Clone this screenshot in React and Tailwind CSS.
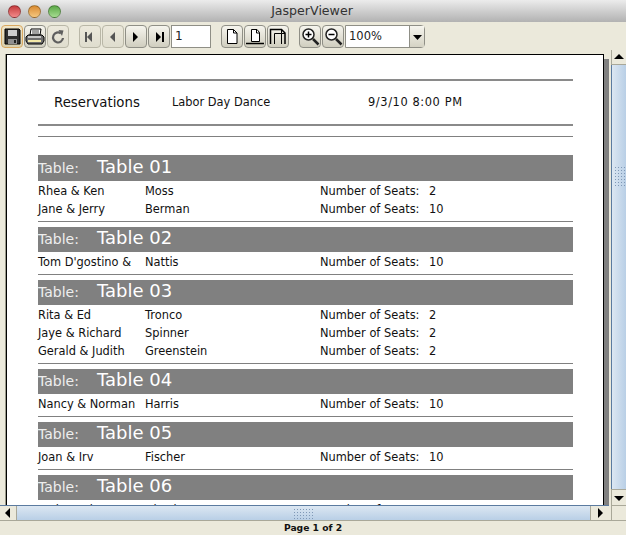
const font = { fontFamily: '"DejaVu Sans", sans-serif' }

const tables = [
  { name: 'Table 01', rows: [['Rhea & Ken', 'Moss', '2'], ['Jane & Jerry', 'Berman', '10']] },
  { name: 'Table 02', rows: [["Tom D'gostino &", 'Nattis', '10']] },
  { name: 'Table 03', rows: [['Rita & Ed', 'Tronco', '2'], ['Jaye & Richard', 'Spinner', '2'], ['Gerald & Judith', 'Greenstein', '2']] },
  { name: 'Table 04', rows: [['Nancy & Norman', 'Harris', '10']] },
  { name: 'Table 05', rows: [['Joan & Irv', 'Fischer', '10']] },
  { name: 'Table 06', rows: [['Lori & Bob', 'Hirsch', '10']] },
]

function Light({ className }) {
  return <span className={`block w-[13px] h-[13px] rounded-full border border-black/30 bg-gradient-to-b ${className}`} />
}

function ToolButton({ children, active, dim }) {
  return (
    <button
      className={`w-[22px] h-[23px] flex items-center justify-center rounded-[4px] border bg-gradient-to-b ${
        active
          ? 'border-[#d9a860] from-[#f1e6c8] to-[#d8cfae]'
          : dim
            ? 'border-[#b9b7a7] from-[#ece9dc] to-[#dfddce]'
            : 'border-[#8f8f86] from-[#f6f5ee] to-[#d0cebf]'
      }`}
    >
      {children}
    </button>
  )
}

function Arrow({ dir, color = '#000', bar }) {
  const shape = dir === 'left' ? '8,2 3,7 8,12' : '3,2 8,7 3,12'
  return (
    <svg width="12" height="14" viewBox="0 0 12 14">
      <polygon points={shape} fill={color} />
      {bar === 'left' && <rect x="1" y="2" width="2" height="10" fill={color} />}
      {bar === 'right' && <rect x="9" y="2" width="2" height="10" fill={color} />}
    </svg>
  )
}

function SaveIcon() {
  return (
    <svg width="17" height="17" viewBox="0 0 17 17">
      <path d="M1 1h14l1 1v14H1z" fill="#2f2f2f" stroke="#000" />
      <rect x="4" y="2" width="9" height="6" fill="#cfcfcf" />
      <rect x="4" y="11" width="9" height="5" fill="#8f8f8f" />
      <rect x="10" y="12" width="2" height="3" fill="#222" />
    </svg>
  )
}

function PrintIcon() {
  return (
    <svg width="20" height="17" viewBox="0 0 20 17">
      <path d="M6 1h10l-1 6H5z" fill="#fff" stroke="#000" />
      <path d="M7 3h7M7 5h7" stroke="#444" />
      <path d="M3 7h14l2 2v4l-2 3H3l-2-3V9z" fill="#6f6f6f" stroke="#000" />
      <rect x="3" y="12" width="13" height="2" fill="#f4e9a8" />
      <path d="M3 9h13" stroke="#e4e4e4" strokeWidth="1.500" />
    </svg>
  )
}

function ReloadIcon() {
  return (
    <svg width="16" height="16" viewBox="0 0 16 16" fill="none">
      <path d="M10.800 4.300A5 5 0 1 0 13 9" stroke="#5e5e5e" strokeWidth="2.200" />
      <polygon points="8.500,1 13.500,1.500 12,7" fill="#5e5e5e" />
    </svg>
  )
}

function ActualIcon() {
  return (
    <svg width="14" height="17" viewBox="0 0 14 17" fill="none" stroke="#000">
      <path d="M2.500 1.500h6l3.500 3.500v10.500h-9.500z" fill="#fff" />
      <path d="M8.500 1.500v3.500h3.500" />
    </svg>
  )
}

function FitWidthIcon() {
  return (
    <svg width="18" height="17" viewBox="0 0 18 17" fill="none" stroke="#000">
      <path d="M5.500 1.500h5.500l2.500 3v9h-8z" fill="#fff" />
      <path d="M10.500 1.500v3.500h3" />
      <path d="M0 15.500h18" strokeWidth="1.500" />
    </svg>
  )
}

function FitPageIcon() {
  return (
    <svg width="18" height="17" viewBox="0 0 18 17" fill="none" stroke="#000">
      <path d="M1.500 16v-14.500h11l3.500 3.500v11" strokeWidth="1.500" />
      <path d="M5.500 16v-10.500h7v10.500" />
      <path d="M12.500 1.500v4h3.500" />
    </svg>
  )
}

function ZoomIcon({ plus }) {
  return (
    <svg width="19" height="19" viewBox="0 0 19 19" fill="none">
      <circle cx="7.500" cy="7.500" r="5.500" fill="#fff" stroke="#222" strokeWidth="1.500" />
      <path d="M12 12l5.500 5.500" stroke="#222" strokeWidth="2.500" />
      <path d="M4.500 7.500h6" stroke="#000" strokeWidth="1.500" />
      {plus && <path d="M7.500 4.500v6" stroke="#000" strokeWidth="1.500" />}
    </svg>
  )
}

function Dots({ className }) {
  return (
    <div
      className={`bg-[radial-gradient(#7f98b6_0.7px,transparent_0.9px)] bg-[length:3px_3px] ${className}`}
    />
  )
}

function ScrollButton({ points, className }) {
  return (
    <div className={`flex items-center justify-center bg-[#ebe9db] border-[#a9a899] ${className}`}>
      <svg width="10" height="10" viewBox="0 0 10 10">
        <polygon points={points} fill="#000" />
      </svg>
    </div>
  )
}

function TableGroup({ table, first }) {
  return (
    <div>
      <div className={`h-[26px] bg-[#808080] text-white flex items-center ${first ? '' : 'shadow-[inset_0_1px_0_#fff]'}`}>
        <span className="w-[59px] text-[14px] text-[#eeeeee]">Table:</span>
        <span className="text-[18px] pb-[3px]">{table.name}</span>
      </div>
      {table.rows.map((row) => (
        <div key={row[0]} className="h-[18px] flex items-center pt-[4px] text-[11.4px] text-[#111]">
          <span className="w-[107px] whitespace-nowrap">{row[0]}</span>
          <span className="w-[175px]">{row[1]}</span>
          <span className="w-[109px]">Number of Seats:</span>
          <span>{row[2]}</span>
        </div>
      ))}
      <div className="h-[9px] pt-[4px]">
        <div className="h-px bg-[#808080]" />
      </div>
    </div>
  )
}

export default function App() {
  return (
    <div className="w-[626px] h-[535px] flex flex-col overflow-hidden bg-[#ebe9db]" style={font}>
      <div className="h-[22px] relative flex items-center justify-center pt-px pr-[2px] bg-gradient-to-b from-[#ececec] to-[#b2b2b2] text-[12.6px] text-[#333]">
        <div className="absolute left-[8px] top-[5px] flex gap-[7px]">
          <Light className="from-[#c4383c] to-[#f2898a]" />
          <Light className="from-[#d98a2c] to-[#f5c77e]" />
          <Light className="from-[#5aa845] to-[#a5dc90]" />
        </div>
        JasperViewer
      </div>

      <div className="h-[29px] flex items-center pl-px pt-[2px] bg-[#ebe9db]">
        <div className="flex gap-px">
          <ToolButton active><SaveIcon /></ToolButton>
          <ToolButton><PrintIcon /></ToolButton>
          <ToolButton dim><ReloadIcon /></ToolButton>
        </div>
        <div className="flex gap-px ml-[10px]">
          <ToolButton dim><Arrow dir="left" bar="left" color="#555" /></ToolButton>
          <ToolButton dim><Arrow dir="left" color="#555" /></ToolButton>
          <ToolButton><Arrow dir="right" /></ToolButton>
          <ToolButton><Arrow dir="right" bar="right" /></ToolButton>
          <div className="w-[40px] h-[23px] bg-white border border-[#8f8f86] text-[12px] text-[#222] pl-[3px] leading-[21px]">1</div>
        </div>
        <div className="flex gap-px ml-[10px]">
          <ToolButton><ActualIcon /></ToolButton>
          <ToolButton><FitWidthIcon /></ToolButton>
          <ToolButton><FitPageIcon /></ToolButton>
        </div>
        <div className="flex gap-px ml-[10px]">
          <ToolButton><ZoomIcon plus /></ToolButton>
          <ToolButton><ZoomIcon /></ToolButton>
          <div className="w-[80px] h-[23px] flex bg-white border border-[#8f8f86] rounded-r-[4px]">
            <span className="flex-1 text-[11.5px] text-[#222] pl-[3px] leading-[21px]">100%</span>
            <span className="w-[15px] flex items-center justify-center border-l border-[#8f8f86] bg-gradient-to-b from-[#f6f5ee] to-[#d5d3c4]">
              <svg width="9" height="6" viewBox="0 0 9 6"><polygon points="0,1 9,1 4.500,6" fill="#000" /></svg>
            </span>
          </div>
        </div>
      </div>

      <div className="h-[470px] flex">
        <div className="w-[611px] flex flex-col">
          <div className="h-[455px] overflow-hidden pl-[6px] pt-[4px]">
            <div className="w-[598px] h-[600px] bg-white border border-black shadow-[5px_5px_0_#808080,-1px_0_0_#9a9a8a] pl-[31px] pt-[24px]">
              <div className="w-[535px]">
                <div className="h-[47px] border-y-2 border-[#8a8a8a] flex items-center pl-[16px] text-[#111]">
                  <span className="w-[118px] text-[13.3px] pt-px">Reservations</span>
                  <span className="w-[196px] text-[11.4px]">Labor Day Dance</span>
                  <span className="text-[11.4px] tracking-[0.6px]">9/3/10 8:00 PM</span>
                </div>
                <div className="h-[10px]" />
                <div className="h-px bg-[#808080] mb-[18px]" />
                {tables.map((t, i) => <TableGroup key={t.name} table={t} first={i === 0} />)}
              </div>
            </div>
          </div>
          <div className="h-[15px] flex mr-[2px] border-t border-[#5b7ba0] bg-gradient-to-b from-[#dce7f2] to-[#b9cfe6]">
            <ScrollButton points="7,0 2,5 7,10" className="w-[17px] border-r" />
            <div className="flex-1 flex justify-center items-center">
              <Dots className="w-[22px] h-[11px]" />
            </div>
            <ScrollButton points="3,0 8,5 3,10" className="w-[19px] border-l" />
          </div>
        </div>
        <div className="w-[15px] flex flex-col">
          <ScrollButton points="0,7 5,2 10,7" className="h-[15px] border-l border-b" />
          <div className="flex-1 pt-[101px] flex justify-center border-l border-[#5b7ba0] bg-gradient-to-r from-[#dce7f2] to-[#b9cfe6]">
            <Dots className="w-[11px] h-[22px]" />
          </div>
          <ScrollButton points="0,3 10,3 5,8" className="h-[16px] border-l border-t" />
          <div className="h-[15px] bg-[#ebe9db] border-l border-t border-[#a9a899]" />
        </div>
      </div>

      <div className="flex-1 text-center text-[9.2px] font-bold leading-[14px] text-[#111] border-t border-[#a9a899]">
        Page 1 of 2
      </div>
    </div>
  )
}
